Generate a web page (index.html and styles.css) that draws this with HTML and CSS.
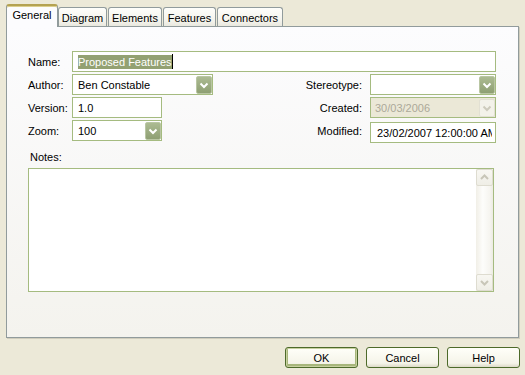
FILE: index.html
```html
<!DOCTYPE html>
<html>
	<head>
		<meta charset="UTF-8">
		<title>Diagram Properties</title>
		<link rel="stylesheet" href="styles.css">
	</head>
	<body>
		<div class="tabs">
			<div class="tab active w-general">General</div>
			<div class="tab w-diagram">Diagram</div>
			<div class="tab w-elements">Elements</div>
			<div class="tab w-features">Features</div>
			<div class="tab w-connectors">Connectors</div>
		</div>
		<div class="panel">
			<div class="form">
				<label class="lbl">Name:</label>
				<div class="field name"><span class="sel">Proposed Features</span><span class="caret"></span></div>

				<label class="lbl">Author:</label>
				<div class="field combo author">
					<span class="val">Ben Constable</span>
					<span class="drop"><svg width="14" height="16" viewBox="0 0 14 16"><polyline points="3.5,6.5 7,10 10.5,6.5" fill="none" stroke="#fff" stroke-width="2"/></svg></span>
				</div>
				<label class="lbl right">Stereotype:</label>
				<div class="field combo">
					<span class="val"></span>
					<span class="drop"><svg width="14" height="16" viewBox="0 0 14 16"><polyline points="3.5,6.5 7,10 10.5,6.5" fill="none" stroke="#fff" stroke-width="2"/></svg></span>
				</div>

				<label class="lbl">Version:</label>
				<div class="field short">1.0</div>
				<label class="lbl right">Created:</label>
				<div class="field combo disabled">
					<span class="val">30/03/2006</span>
					<span class="drop"><svg width="14" height="16" viewBox="0 0 14 16"><polyline points="3.5,6.5 7,10 10.5,6.5" fill="none" stroke="#cdcbbd" stroke-width="2"/></svg></span>
				</div>

				<label class="lbl">Zoom:</label>
				<div class="field combo short">
					<span class="val">100</span>
					<span class="drop"><svg width="14" height="16" viewBox="0 0 14 16"><polyline points="3.5,6.5 7,10 10.5,6.5" fill="none" stroke="#fff" stroke-width="2"/></svg></span>
				</div>
				<label class="lbl right">Modified:</label>
				<div class="field modified"><span class="clip">23/02/2007 12:00:00 AM</span></div>
			</div>

			<div class="notes-label">Notes:</div>
			<div class="notes">
				<div class="notes-text"></div>
				<div class="scroll">
					<div class="sbtn"><svg width="15" height="15" viewBox="0 0 15 15"><polyline points="4,9 7.5,5.5 11,9" fill="none" stroke="#c8c6b8" stroke-width="2"/></svg></div>
					<div class="track"></div>
					<div class="sbtn"><svg width="15" height="15" viewBox="0 0 15 15"><polyline points="4,6 7.5,9.5 11,6" fill="none" stroke="#c8c6b8" stroke-width="2"/></svg></div>
				</div>
			</div>
		</div>
		<div class="buttons">
			<div class="btn default">OK</div>
			<div class="btn">Cancel</div>
			<div class="btn">Help</div>
		</div>
	</body>
</html>
```

FILE: styles.css
```css
* {
	margin: 0;
	padding: 0;
	box-sizing: border-box;
}

body {
	background-color: #ece9d8;
	font: 11px "Liberation Sans", Arial, sans-serif;
	color: #000;
	width: 525px;
	height: 375px;
	overflow: hidden;
}

/* tab strip */
.tabs {
	display: flex;
	align-items: flex-end;
	height: 26px;
	padding: 4px 0 0 6px;
}

.tab {
	height: 19px;
	margin-right: 1px;
	border: 1px solid #919b9c;
	border-bottom: none;
	border-radius: 3px 3px 0 0;
	background: linear-gradient(#fefefb, #f4f3ec 70%, #e9e8df);
	display: flex;
	align-items: center;
	justify-content: center;
	padding-top: 1px;
}

.tab.active {
	position: relative;
	z-index: 1;
	height: 23px;
	margin-bottom: -1px;
	margin-right: 0;
	background: #fcfcfe;
	border-top: 2px solid #b4a252;
	box-shadow: inset 0 1px 0 #dccf8e;
	padding: 0 0 3px;
}

.w-general { width: 52px; }
.w-diagram { width: 49px; }
.w-elements { width: 54px; }
.w-features { width: 53px; }
.w-connectors { width: 66px; }

/* page of the tab */
.panel {
	margin-left: 6px;
	width: 513px;
	height: 312px;
	border: 1px solid #919b9c;
	background: linear-gradient(#fcfcfe, #f4f3ee);
	box-shadow: 1px 1px 0 #d0cdbd;
	padding: 24px 22px 0 21px;
}

.form {
	display: grid;
	grid-template-columns: 44px 1fr auto 126px;
	grid-auto-rows: 21px;
	row-gap: 2px;
}

.lbl {
	display: flex;
	align-items: center;
	padding-top: 1px;
}

.lbl.right {
	justify-content: flex-end;
	padding-right: 8px;
}

.field {
	border: 1px solid #a5bb80;
	background: #fff;
	display: flex;
	align-items: center;
	padding-left: 5px;
	white-space: nowrap;
	overflow: hidden;
}

.field.name {
	grid-column: 2 / 5;
}

.sel {
	background: #93a172;
	color: #fff;
	line-height: 14px;
}

.caret {
	width: 1px;
	height: 15px;
	background: #000;
}

.field.author {
	width: 141px;
	grid-column: 2 / 3;
}

.field.short {
	width: 90px;
	grid-column: 2 / 3;
}

.combo {
	padding-right: 0;
}

.combo .val {
	flex: 1;
}

.drop {
	align-self: flex-start;
	margin-top: 1px;
	width: 16px;
	height: 18px;
	border: 1px solid #b9c6a3;
	border-radius: 2px;
	background: linear-gradient(#acbb92, #8e9f73);
	display: flex;
	align-items: center;
	justify-content: center;
}

.disabled {
	background: #ebe8d7;
	color: #aca899;
	padding-left: 4px;
}

.disabled .drop {
	background: #f3f2ea;
	border-color: #e2e0d3;
}

.modified {
	margin-top: 2px;
	height: 21px;
	padding-left: 6px;
}

.clip {
	display: block;
	width: 115px;
	overflow: hidden;
}

/* notes */
.notes-label {
	line-height: 13px;
	margin-top: 10px;
	padding-left: 2px;
}

.notes {
	margin-top: 4px;
	width: 466px;
	height: 124px;
	border: 1px solid #a5bb80;
	background: #fff;
	display: flex;
}

.notes-text {
	flex: 1;
}

.scroll {
	width: 17px;
	display: flex;
	flex-direction: column;
	background: linear-gradient(to right, #f1efe7, #fdfdfb 40%, #f6f5f0 80%, #ecebe3);
}

.sbtn {
	height: 17px;
	border: 1px solid #dedcd0;
	border-radius: 2px;
	background: linear-gradient(#f8f7f2, #efeee6);
	display: flex;
	align-items: center;
	justify-content: center;
}

.track {
	flex: 1;
}

/* dialog buttons */
.buttons {
	display: flex;
	justify-content: flex-end;
	gap: 8px;
	margin-top: 9px;
	padding-right: 5px;
}

.btn {
	width: 73px;
	height: 21px;
	border: 1px solid #4d6a2a;
	border-radius: 3px;
	background: linear-gradient(#fffff9, #f5f4e9 80%, #dcdac8);
	display: flex;
	align-items: center;
	justify-content: center;
}

.btn.default {
	box-shadow: inset 0 0 0 1px #c7d09f, inset 0 -1px 0 2px #a7b67b;
}
```
